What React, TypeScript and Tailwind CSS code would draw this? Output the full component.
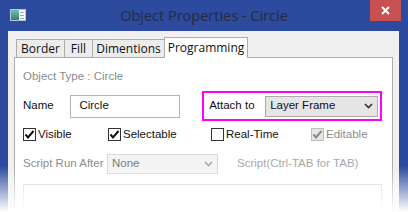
import React from "react";

const dlg = { fontFamily: '"Liberation Sans", Arial, sans-serif' };
const ui = { fontFamily: '"Open Sans", "Noto Sans", sans-serif' };

function Check({ checked, disabled }: { checked?: boolean; disabled?: boolean }) {
  return (
    <span
      className={`w-[13px] h-[13px] border flex items-center justify-center shrink-0 ${
        disabled ? "border-[#bcbcbc] bg-[#e6e6e6]" : "border-[#333] bg-white"
      }`}
    >
      {checked && (
        <svg width="11" height="11" viewBox="0 0 11 11">
          <path
            d="M1.5 5.5 L4 8.5 L9.5 2"
            fill="none"
            stroke={disabled ? "#8a8a8a" : "#111"}
            strokeWidth="2"
          />
        </svg>
      )}
    </span>
  );
}

function Chevron({ color }: { color: string }) {
  return (
    <svg width="9" height="6" viewBox="0 0 9 6">
      <path d="M1 1 L4.5 4.5 L8 1" fill="none" stroke={color} strokeWidth="1.6" />
    </svg>
  );
}

export default function App() {
  const tabs = [
    { label: "Border", w: "w-[49px]" },
    { label: "Fill", w: "w-[29px]" },
    { label: "Dimentions", w: "w-[73px]" },
  ];

  return (
    <div className="relative w-[408px] h-[212px] overflow-hidden bg-[#2c4a9e] flex flex-col">
      {/* title bar */}
      <div className="h-[31px] flex items-start shrink-0">
        <div className="pl-[10px] pt-[9px] w-[60px]">
          <div className="w-[16px] h-[12px] border border-[#b8c4c8] bg-white flex">
            <div className="w-[8px] bg-gradient-to-b from-[#6fc0a8] to-[#2d7f86]" />
            <div className="flex-1 flex flex-col gap-[2px] pt-[2px] px-[1px]">
              <div className="h-[1px] bg-[#9aa]" />
              <div className="h-[1px] bg-[#9aa]" />
              <div className="h-[1px] bg-[#9aa]" />
            </div>
          </div>
        </div>
        <div className="flex-1 text-center pt-[5px] text-[14.5px] text-[#262a3a]" style={ui}>
          Object Properties - Circle
        </div>
        <div className="w-[60px] flex justify-end pr-[7px]">
          <div className="w-[31px] h-[21px] bg-[#c75050] flex items-center justify-center">
            <svg width="9" height="9" viewBox="0 0 9 9">
              <path d="M1 1 L8 8 M8 1 L1 8" stroke="#fff" strokeWidth="2" />
            </svg>
          </div>
        </div>
      </div>

      {/* client area */}
      <div className="flex-1 ml-[8px] mr-[9px] bg-[#f0f0f0] px-[6px] pt-[5px] flex flex-col">
        <div className="flex items-end pl-[2px] h-[21px] shrink-0 relative z-10" style={ui}>
          {tabs.map((t) => (
            <div
              key={t.label}
              className={`${t.w} h-[18px] -mr-[1px] border border-b-0 border-[#acacac] bg-[#ececec] text-[12px] text-[#111] flex items-center justify-center`}
            >
              {t.label}
            </div>
          ))}
          <div className="w-[84px] h-[21px] border border-b-0 border-[#acacac] bg-white text-[12px] text-[#111] flex items-center justify-center -mb-[1px]">
            Programming
          </div>
        </div>

        <div className="flex-1 border border-[#acacac] bg-white pl-[8px] pr-[10px]" style={dlg}>
          <div className="mt-[11px] h-[14px] text-[11.5px] leading-[14px] text-[#8c8c8c]">
            Object Type : Circle
          </div>

          <div className="mt-[8px] h-[30px] flex items-center text-[11.5px] text-[#111]">
            <span className="w-[48px]">Name</span>
            <div className="w-[111px] h-[23px] border border-[#b5b5b5] bg-white flex items-center pl-[8px]">
              Circle
            </div>
            <div className="ml-[22px] w-[182px] h-[30px] border-2 border-[#ff00ff] flex items-center pl-[5px]">
              <span className="w-[56px]">Attach to</span>
              <div className="w-[113px] h-[21px] border border-[#acacac] bg-[#e5e5e5] flex items-center justify-between pl-[4px] pr-[4px]">
                <span>Layer Frame</span>
                <Chevron color="#333" />
              </div>
            </div>
          </div>

          <div className="mt-[7px] h-[13px] flex items-center text-[11.5px] text-[#111]">
            <div className="w-[85px] flex items-center gap-[2px]">
              <Check checked />
              <span>Visible</span>
            </div>
            <div className="w-[103px] flex items-center gap-[2px]">
              <Check checked />
              <span>Selectable</span>
            </div>
            <div className="w-[100px] flex items-center gap-[2px]">
              <Check />
              <span>Real-Time</span>
            </div>
            <div className="flex items-center gap-[2px] text-[#8c8c8c]">
              <Check checked disabled />
              <span>Editable</span>
            </div>
          </div>

          <div className="mt-[13px] h-[20px] flex items-center text-[11.5px]">
            <span className="w-[84px] text-[#8c8c8c]">Script Run After</span>
            <div className="w-[111px] h-[20px] border border-[#d9d9d9] bg-[#f4f4f4] flex items-center justify-between pl-[4px] pr-[4px] text-[#7a7a7a]">
              <span>None</span>
              <Chevron color="#a8a8a8" />
            </div>
            <span className="ml-[19px] text-[#a8a8a8]">Script(Ctrl-TAB for TAB)</span>
          </div>

          <div className="mt-[10px] h-[60px] border border-[#d4d4d4] bg-white" />
        </div>
      </div>

      {/* bottom fade */}
      <div className="absolute left-0 right-0 bottom-0 h-[46px] bg-gradient-to-b from-white/0 to-white pointer-events-none" />
    </div>
  );
}
